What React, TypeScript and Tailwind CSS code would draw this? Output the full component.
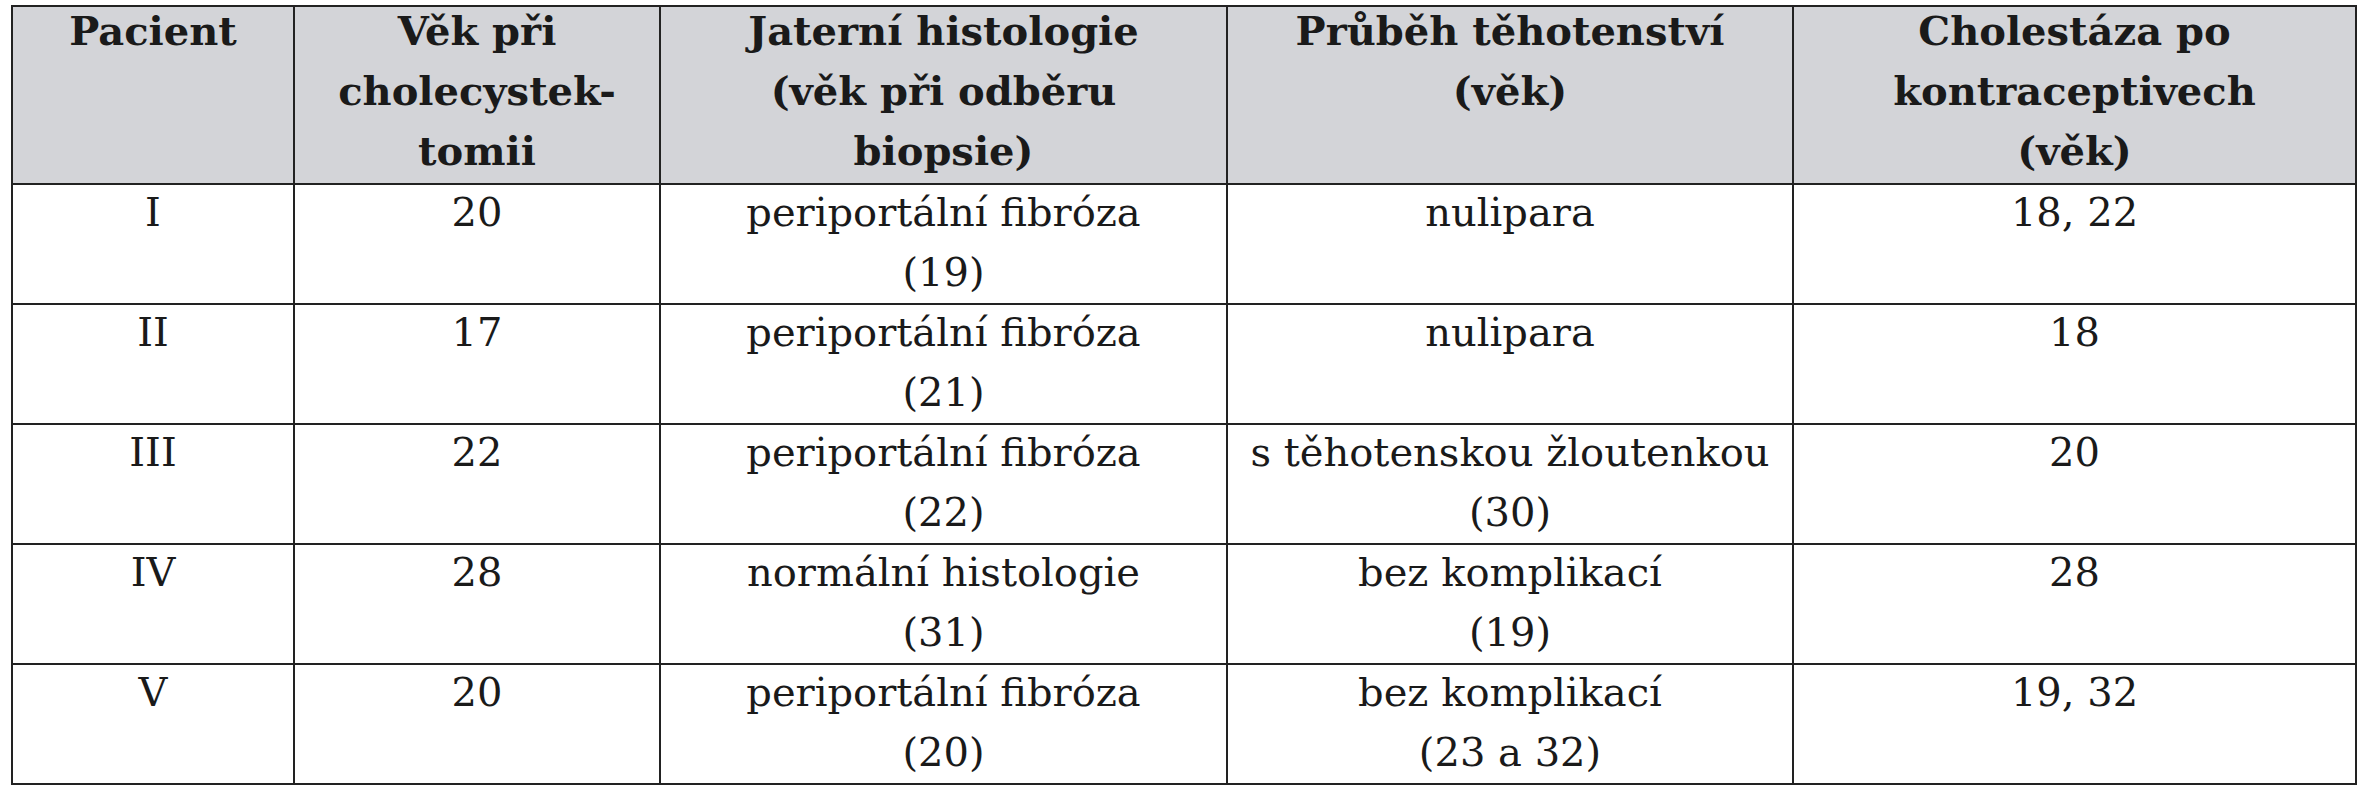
const HEAD = [
  ['Pacient'],
  ['Věk při', 'cholecystek-', 'tomii'],
  ['Jaterní histologie', '(věk při odběru', 'biopsie)'],
  ['Průběh těhotenství', '(věk)'],
  ['Cholestáza po', 'kontraceptivech', '(věk)'],
]

const ROWS: string[][][] = [
  [['I'], ['20'], ['periportální fibróza', '(19)'], ['nulipara'], ['18, 22']],
  [['II'], ['17'], ['periportální fibróza', '(21)'], ['nulipara'], ['18']],
  [['III'], ['22'], ['periportální fibróza', '(22)'], ['s těhotenskou žloutenkou', '(30)'], ['20']],
  [['IV'], ['28'], ['normální histologie', '(31)'], ['bez komplikací', '(19)'], ['28']],
  [['V'], ['20'], ['periportální fibróza', '(20)'], ['bez komplikací', '(23 a 32)'], ['19, 32']],
]

// each line sits in a 60px slot; the line box is shorter so the text hugs the top
function Lines({ lines, lead }: { lines: string[]; lead: string }) {
  return (
    <>
      {lines.map((l, i) => (
        <div key={i} className={`h-[60px] whitespace-nowrap ${lead}`}>{l}</div>
      ))}
    </>
  )
}

export default function App() {
  return (
    <div className="w-[2375px] h-[800px] bg-white pt-[5px] pl-[11px]" style={{ fontFamily: '"DejaVu Serif", "Liberation Serif", serif' }}>
      <div className="w-[2346px] grid grid-cols-[282px_366px_567px_566px_563px] border-l-2 border-t-2 border-[#222] text-[40px] text-[#1a1a1a]">
        {HEAD.map((h, i) => (
          <div key={i} className="h-[178px] bg-[#d3d4d8] border-r-2 border-b-2 border-[#222] text-center font-bold">
            <Lines lines={h} lead="leading-[47px]" />
          </div>
        ))}
        {ROWS.map((row, r) =>
          row.map((cell, c) => (
            <div key={`${r}-${c}`} className="h-[120px] border-r-2 border-b-2 border-[#222] text-center">
              <Lines lines={cell} lead="leading-[55px]" />
            </div>
          ))
        )}
      </div>
    </div>
  )
}
